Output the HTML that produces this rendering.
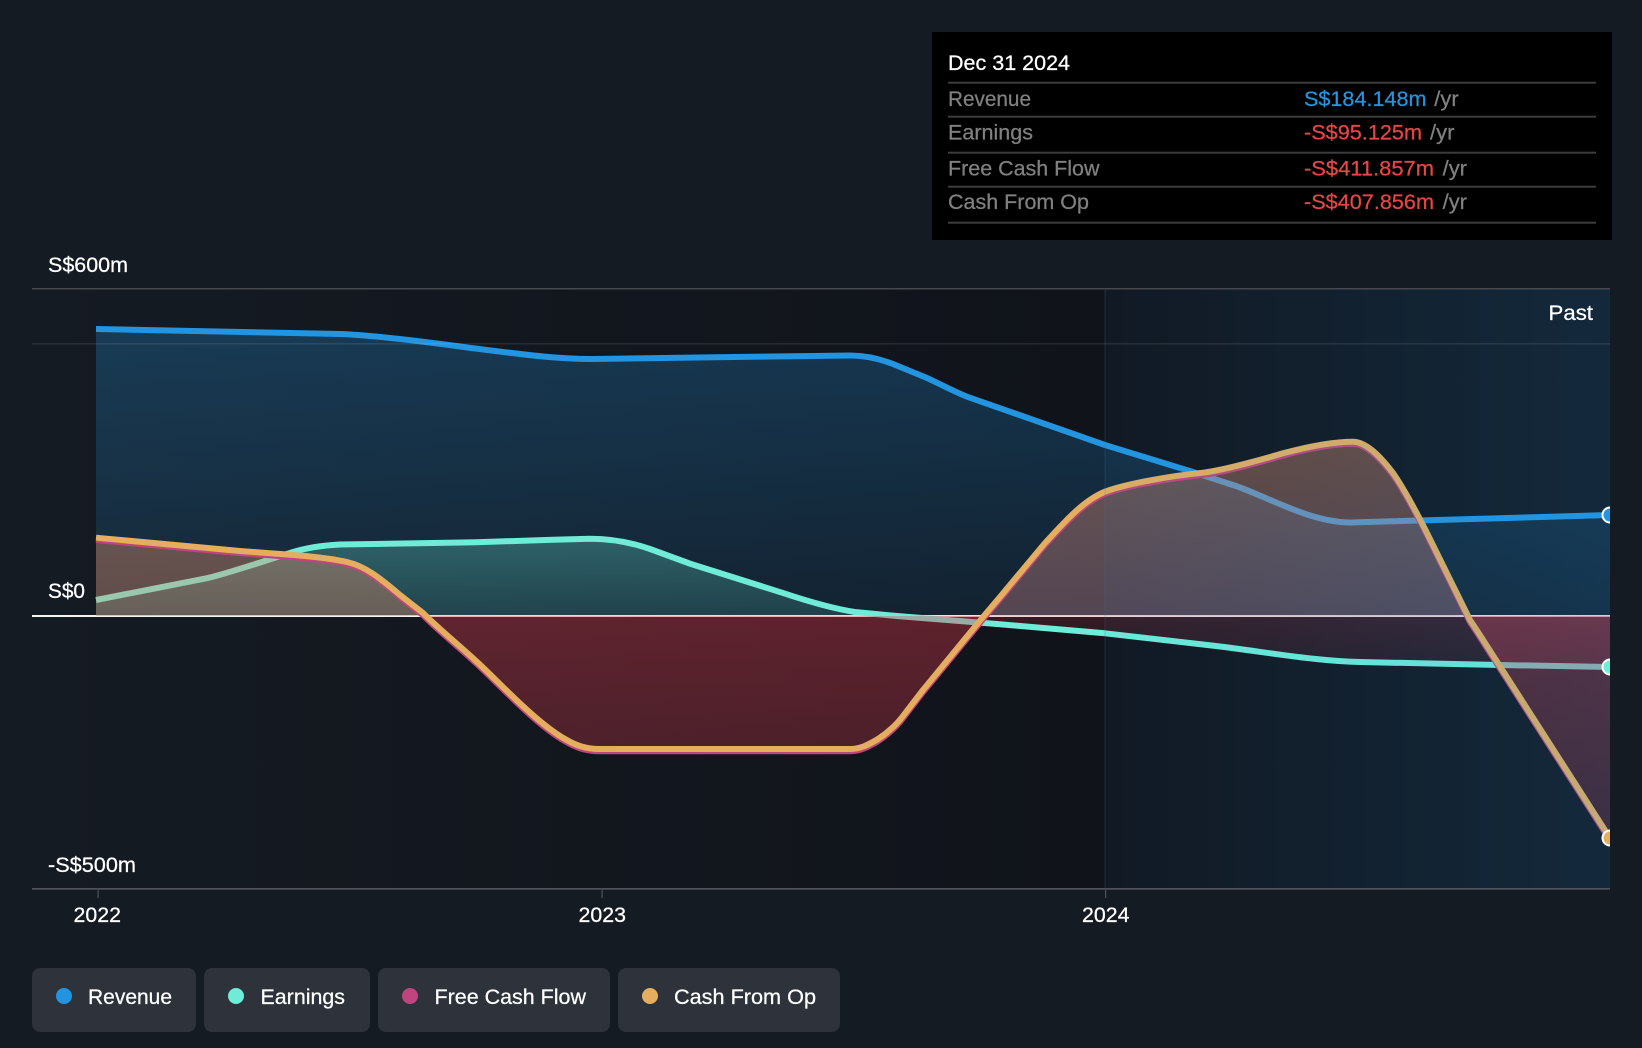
<!DOCTYPE html>
<html lang="en">
<head>
<meta charset="utf-8">
<title>Revenue and Earnings Chart</title>
<style>
html,body{margin:0;padding:0;background:#151b23;width:1642px;height:1048px;overflow:hidden}
svg{display:block}
text{font-family:"Liberation Sans",sans-serif;font-size:21px;stroke-width:.25px}
</style>
</head>
<body>
<svg width="1642" height="1048" viewBox="0 0 1642 1048" xmlns="http://www.w3.org/2000/svg">
<defs>
<linearGradient id="bgp" gradientUnits="userSpaceOnUse" x1="32" y1="0" x2="1105" y2="0">
<stop offset="0" stop-color="#151b23"/><stop offset="1" stop-color="#10131a"/>
</linearGradient>
<linearGradient id="band" gradientUnits="userSpaceOnUse" x1="1105" y1="0" x2="1610" y2="0">
<stop offset="0" stop-color="#2394df" stop-opacity=".05"/><stop offset="1" stop-color="#2394df" stop-opacity=".17"/>
</linearGradient>
<linearGradient id="fRev" gradientUnits="userSpaceOnUse" x1="0" y1="329" x2="0" y2="616">
<stop offset="0" stop-color="#2394df" stop-opacity=".27"/><stop offset="1" stop-color="#2394df" stop-opacity=".11"/>
</linearGradient>
<linearGradient id="fEarn" gradientUnits="userSpaceOnUse" x1="0" y1="539" x2="0" y2="616">
<stop offset="0" stop-color="#6ce9d6" stop-opacity=".29"/><stop offset="1" stop-color="#6ce9d6" stop-opacity=".15"/>
</linearGradient>
<linearGradient id="fEarnN" gradientUnits="userSpaceOnUse" x1="0" y1="616" x2="0" y2="667">
<stop offset="0" stop-color="#e23a4b" stop-opacity=".18"/><stop offset="1" stop-color="#e23a4b" stop-opacity=".1"/>
</linearGradient>
<linearGradient id="fPosL" gradientUnits="userSpaceOnUse" x1="0" y1="537" x2="0" y2="616">
<stop offset="0" stop-color="#e18c69" stop-opacity=".4"/><stop offset="1" stop-color="#e18c69" stop-opacity=".36"/>
</linearGradient>
<linearGradient id="fPosR" gradientUnits="userSpaceOnUse" x1="0" y1="441" x2="0" y2="616">
<stop offset="0" stop-color="#e18c64" stop-opacity=".42"/><stop offset="1" stop-color="#d78c96" stop-opacity=".33"/>
</linearGradient>
<linearGradient id="fNeg" gradientUnits="userSpaceOnUse" x1="0" y1="616" x2="0" y2="838">
<stop offset="0" stop-color="#e23a4b" stop-opacity=".37"/><stop offset="1" stop-color="#e23a4b" stop-opacity=".22"/>
</linearGradient>
<clipPath id="plot"><rect x="32" y="280" width="1578" height="610"/></clipPath>
</defs>

<rect width="1642" height="1048" fill="#151b23"/>
<rect x="32" y="289" width="1578" height="600" fill="url(#bgp)"/>
<rect x="1105" y="289" width="505" height="600" fill="#10131a"/>

<!-- zero line -->
<rect x="32" y="615" width="1578" height="2" fill="#f2f2f2"/>

<g clip-path="url(#plot)" fill="none" stroke-linejoin="round">
<!-- revenue -->
<path fill="url(#fRev)" d="M96,616 L96,329 L340,334 C370,335 420,341 471,348 C520,354 555,359 592,359 L733,357 L850,355.5 C865,355.5 880,359 893,364 L927,378 C940,384 955,392 967,396.7 L1105,445 L1193,472 L1236,486 C1270,498 1310,522 1350,522.5 L1610,515 L1610,616 Z"/>
<path stroke="#2394df" stroke-width="6" d="M96,329 L340,334 C370,335 420,341 471,348 C520,354 555,359 592,359 L733,357 L850,355.5 C865,355.5 880,359 893,364 L927,378 C940,384 955,392 967,396.7 L1105,445 L1193,472 L1236,486 C1270,498 1310,522 1350,522.5 L1610,515"/>

<!-- earnings -->
<path fill="url(#fEarn)" d="M96,616 L96,600 L205,578.6 C225,574.5 270,559 290,553 C305,548 320,545.5 340,544.5 L476,542.3 L553,539.7 L590,538.7 C610,538.7 630,542 650,549 L691,564 L782,592.7 C810,602 835,609 855,612 L897,616 Z"/>
<path fill="url(#fEarnN)" d="M897,616 L1000,624.3 L1105,633.3 L1216,646 C1250,650 1285,656 1316,659 C1330,660.5 1340,661.5 1360,662 L1500,665 L1610,667 L1610,616 Z"/>
<path stroke="#6fecd8" stroke-width="6" d="M96,600 L205,578.6 C225,574.5 270,559 290,553 C305,548 320,545.5 340,544.5 L476,542.3 L553,539.7 L590,538.7 C610,538.7 630,542 650,549 L691,564 L782,592.7 C810,602 835,609 855,612 L897,616 L1000,624.3 L1105,633.3 L1216,646 C1250,650 1285,656 1316,659 C1330,660.5 1340,661.5 1360,662 L1500,665 L1610,667"/>

<!-- fcf / cash from op fills -->
<path fill="url(#fPosL)" d="M96,616 L96,538 L240,551 C280,554 320,556 347,562 C365,566 380,578 400,595 L423,616 Z"/>
<path fill="url(#fNeg)" d="M423,616 L423,613 C440,630 460,646 476,661 C497,680 535,722 565,739 C575,745 585,751 600,751 L850,751 C860,751 868,745 878,739 C890,731 897,724 903,716 C910,707 916,699 923,690 L983,617 L983,616 Z"/>
<path fill="url(#fPosR)" d="M983,616 L1000,597 L1045,543 C1062,525 1082,501 1105,491.7 C1125,484 1170,476 1203,472.7 C1225,470 1260,460 1283,453.3 C1310,446 1335,441.7 1353,441.7 C1366,441.7 1380,456 1393,473 C1405,490 1415,510 1423,525 L1468,616 Z"/>
<path fill="url(#fNeg)" d="M1468,616 L1470,620 L1476.7,630 L1610,838 L1610,616 Z"/>

<!-- fcf line -->
<path transform="translate(0,2.2)" stroke="#c0457f" stroke-width="6" d="M96,537.7 L240,551 C280,554 320,556 347,562 C365,566 380,578 400,595 L423,613 C440,630 460,646 476,661 C497,680 535,722 565,739 C575,745 585,749 600,749 L850,749 C860,749 868,745 878,739 C890,731 897,724 903,716 C910,707 916,699 923,690 L983,617 L1000,597 L1045,543 C1062,525 1082,501 1105,491.7 C1125,484 1170,476 1203,472.7 C1225,470 1260,460 1283,453.3 C1310,446 1335,441.7 1353,441.7 C1366,441.7 1380,456 1393,473 C1405,490 1415,510 1423,525 L1470,620 L1476.7,630 L1610,838"/>
<!-- cash line -->
<path stroke="#e4ae5e" stroke-width="6" d="M96,537.7 L240,551 C280,554 320,556 347,562 C365,566 380,578 400,595 L423,613 C440,630 460,646 476,661 C497,680 535,722 565,739 C575,745 585,749 600,749 L850,749 C860,749 868,745 878,739 C890,731 897,724 903,716 C910,707 916,699 923,690 L983,617 L1000,597 L1045,543 C1062,525 1082,501 1105,491.7 C1125,484 1170,476 1203,472.7 C1225,470 1260,460 1283,453.3 C1310,446 1335,441.7 1353,441.7 C1366,441.7 1380,456 1393,473 C1405,490 1415,510 1423,525 L1470,620 L1476.7,630 L1610,838"/>
</g>

<!-- Past band overlay -->
<rect x="1105" y="289" width="505" height="600" fill="url(#band)"/>
<rect x="1104.3" y="289" width="1.4" height="600" fill="#3c78aa" fill-opacity=".2"/>

<!-- grid -->
<rect x="32" y="288" width="1578" height="1.5" fill="#45494f"/>
<rect x="32" y="343" width="1578" height="1.5" fill="#ffffff" fill-opacity=".09"/>
<rect x="32" y="888" width="1578" height="1.7" fill="#50545a"/>
<rect x="97.5" y="890" width="1.2" height="8" fill="#50545a"/>
<rect x="601.5" y="890" width="1.2" height="8" fill="#50545a"/>
<rect x="1105" y="890" width="1.2" height="8" fill="#50545a"/>

<!-- end dots -->
<g clip-path="url(#plot)" stroke="#ffffff" stroke-width="2">
<circle cx="1610" cy="515" r="7.5" fill="#2394df"/>
<circle cx="1610" cy="667" r="7.5" fill="#6fecd8"/>
<circle cx="1610" cy="838" r="7.5" fill="#e4ae5e"/>
</g>

<!-- axis labels -->
<g fill="#ffffff" stroke="#ffffff">
<text x="48" y="272" textLength="80" lengthAdjust="spacingAndGlyphs">S$600m</text>
<text x="48" y="598" textLength="37" lengthAdjust="spacingAndGlyphs">S$0</text>
<text x="48" y="872" textLength="88" lengthAdjust="spacingAndGlyphs">-S$500m</text>
<text x="73.5" y="922" textLength="47.5" lengthAdjust="spacingAndGlyphs">2022</text>
<text x="578.5" y="922" textLength="47.5" lengthAdjust="spacingAndGlyphs">2023</text>
<text x="1082" y="922" textLength="47.5" lengthAdjust="spacingAndGlyphs">2024</text>
<text x="1548.5" y="320" textLength="44.5" lengthAdjust="spacingAndGlyphs">Past</text>
</g>

<!-- tooltip table -->
<rect x="932" y="32" width="680" height="208" fill="#000000"/>
<g fill="#3d3d3d">
<rect x="948" y="81.7" width="648" height="2"/>
<rect x="948" y="115.7" width="648" height="2"/>
<rect x="948" y="151.7" width="648" height="2"/>
<rect x="948" y="185.7" width="648" height="2"/>
<rect x="948" y="221.7" width="648" height="2"/>
</g>
<text x="948" y="70" fill="#ffffff" stroke="#ffffff" textLength="122" lengthAdjust="spacingAndGlyphs">Dec 31 2024</text>
<g fill="#808080" stroke="#808080">
<text x="948" y="106" textLength="83" lengthAdjust="spacingAndGlyphs">Revenue</text>
<text x="948" y="139.5" textLength="85" lengthAdjust="spacingAndGlyphs">Earnings</text>
<text x="948" y="175.5" textLength="151.5" lengthAdjust="spacingAndGlyphs">Free Cash Flow</text>
<text x="948" y="209" textLength="141" lengthAdjust="spacingAndGlyphs">Cash From Op</text>
<text x="1434.3" y="106" textLength="24.4" lengthAdjust="spacingAndGlyphs">/yr</text>
<text x="1430" y="139.5" textLength="24.4" lengthAdjust="spacingAndGlyphs">/yr</text>
<text x="1442.6" y="175.5" textLength="24.4" lengthAdjust="spacingAndGlyphs">/yr</text>
<text x="1442.6" y="209" textLength="24.4" lengthAdjust="spacingAndGlyphs">/yr</text>
</g>
<text x="1304" y="106" fill="#2394df" stroke="#2394df" textLength="122.5" lengthAdjust="spacingAndGlyphs">S$184.148m</text>
<g fill="#e84545" stroke="#e84545">
<text x="1304" y="139.5" textLength="118" lengthAdjust="spacingAndGlyphs">-S$95.125m</text>
<text x="1304" y="175.5" textLength="130" lengthAdjust="spacingAndGlyphs">-S$411.857m</text>
<text x="1304" y="209" textLength="130" lengthAdjust="spacingAndGlyphs">-S$407.856m</text>
</g>

<!-- legend -->
<g fill="#2d323b">
<rect x="32" y="968" width="164" height="64" rx="8"/>
<rect x="204" y="968" width="166" height="64" rx="8"/>
<rect x="378" y="968" width="232" height="64" rx="8"/>
<rect x="618" y="968" width="222" height="64" rx="8"/>
</g>
<circle cx="64" cy="996" r="8" fill="#2394df"/>
<circle cx="236" cy="996" r="8" fill="#6fecd8"/>
<circle cx="410" cy="996" r="8" fill="#c0457f"/>
<circle cx="650" cy="996" r="8" fill="#e4ae5e"/>
<g fill="#ffffff" stroke="#ffffff">
<text x="88" y="1004" textLength="84" lengthAdjust="spacingAndGlyphs">Revenue</text>
<text x="260.5" y="1004" textLength="84.5" lengthAdjust="spacingAndGlyphs">Earnings</text>
<text x="434.5" y="1004" textLength="151.5" lengthAdjust="spacingAndGlyphs">Free Cash Flow</text>
<text x="674" y="1004" textLength="142" lengthAdjust="spacingAndGlyphs">Cash From Op</text>
</g>
</svg>
</body>
</html>
